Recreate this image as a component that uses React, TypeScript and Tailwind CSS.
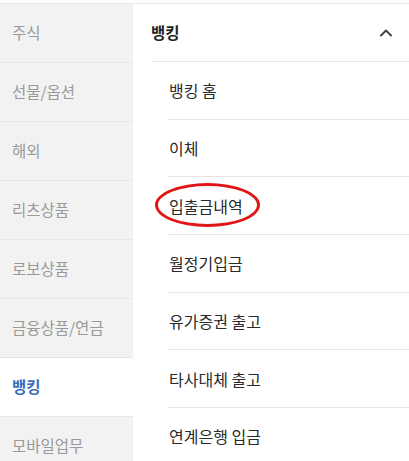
import { ChevronUp } from 'lucide-react'

const MENU = ['주식', '선물/옵션', '해외', '리츠상품', '로보상품', '금융상품/연금', '뱅킹', '모바일업무']
const SUB_ITEMS = ['뱅킹 홈', '이체', '입출금내역', '월정기입금', '유가증권 출고', '타사대체 출고', '연계은행 입금']

export default function App() {
  return (
    <div
      className="h-[461px] w-[409px] overflow-hidden bg-white pt-[3px]"
      style={{ fontFamily: '"Noto Sans CJK KR", "Noto Sans", sans-serif' }}
    >
      <div className="flex border-t border-[#e9e9e9]">
        <ul className="w-[133px] shrink-0 bg-[#f2f2f2]">
          {MENU.map((item) => {
            const active = item === '뱅킹'
            return (
              <li
                key={item}
                className={`flex h-[59px] items-center border-b border-[#e6e6e6] pl-3 text-[15.5px] ${
                  active ? 'bg-white font-bold text-[#3a6cc0]' : 'text-[#999]'
                }`}
              >
                {item}
              </li>
            )
          })}
        </ul>
        <div className="flex-1 bg-white">
          <div className="flex h-[57px] items-center justify-between pl-[18px] pr-[13px]">
            <span className="text-[15.5px] font-bold text-[#222]">뱅킹</span>
            <ChevronUp className="h-[20px] w-[20px] text-[#444]" strokeWidth={2.4} />
          </div>
          <ul className="ml-[18px] border-t border-[#e5e5e5]">
            {SUB_ITEMS.map((item) => (
              <li key={item} className="ml-[17px] border-b border-[#e5e5e5]">
                <div className="relative flex h-[56.7px] items-center pl-[1px] text-[16px] text-[#2a2a2a]">
                  {item}
                  {item === '입출금내역' && (
                    <span className="pointer-events-none absolute left-[-13px] top-[6px] h-[44px] w-[105px] rounded-[50%] border-[3px] border-[#e01515]" />
                  )}
                </div>
              </li>
            ))}
          </ul>
        </div>
      </div>
    </div>
  )
}
